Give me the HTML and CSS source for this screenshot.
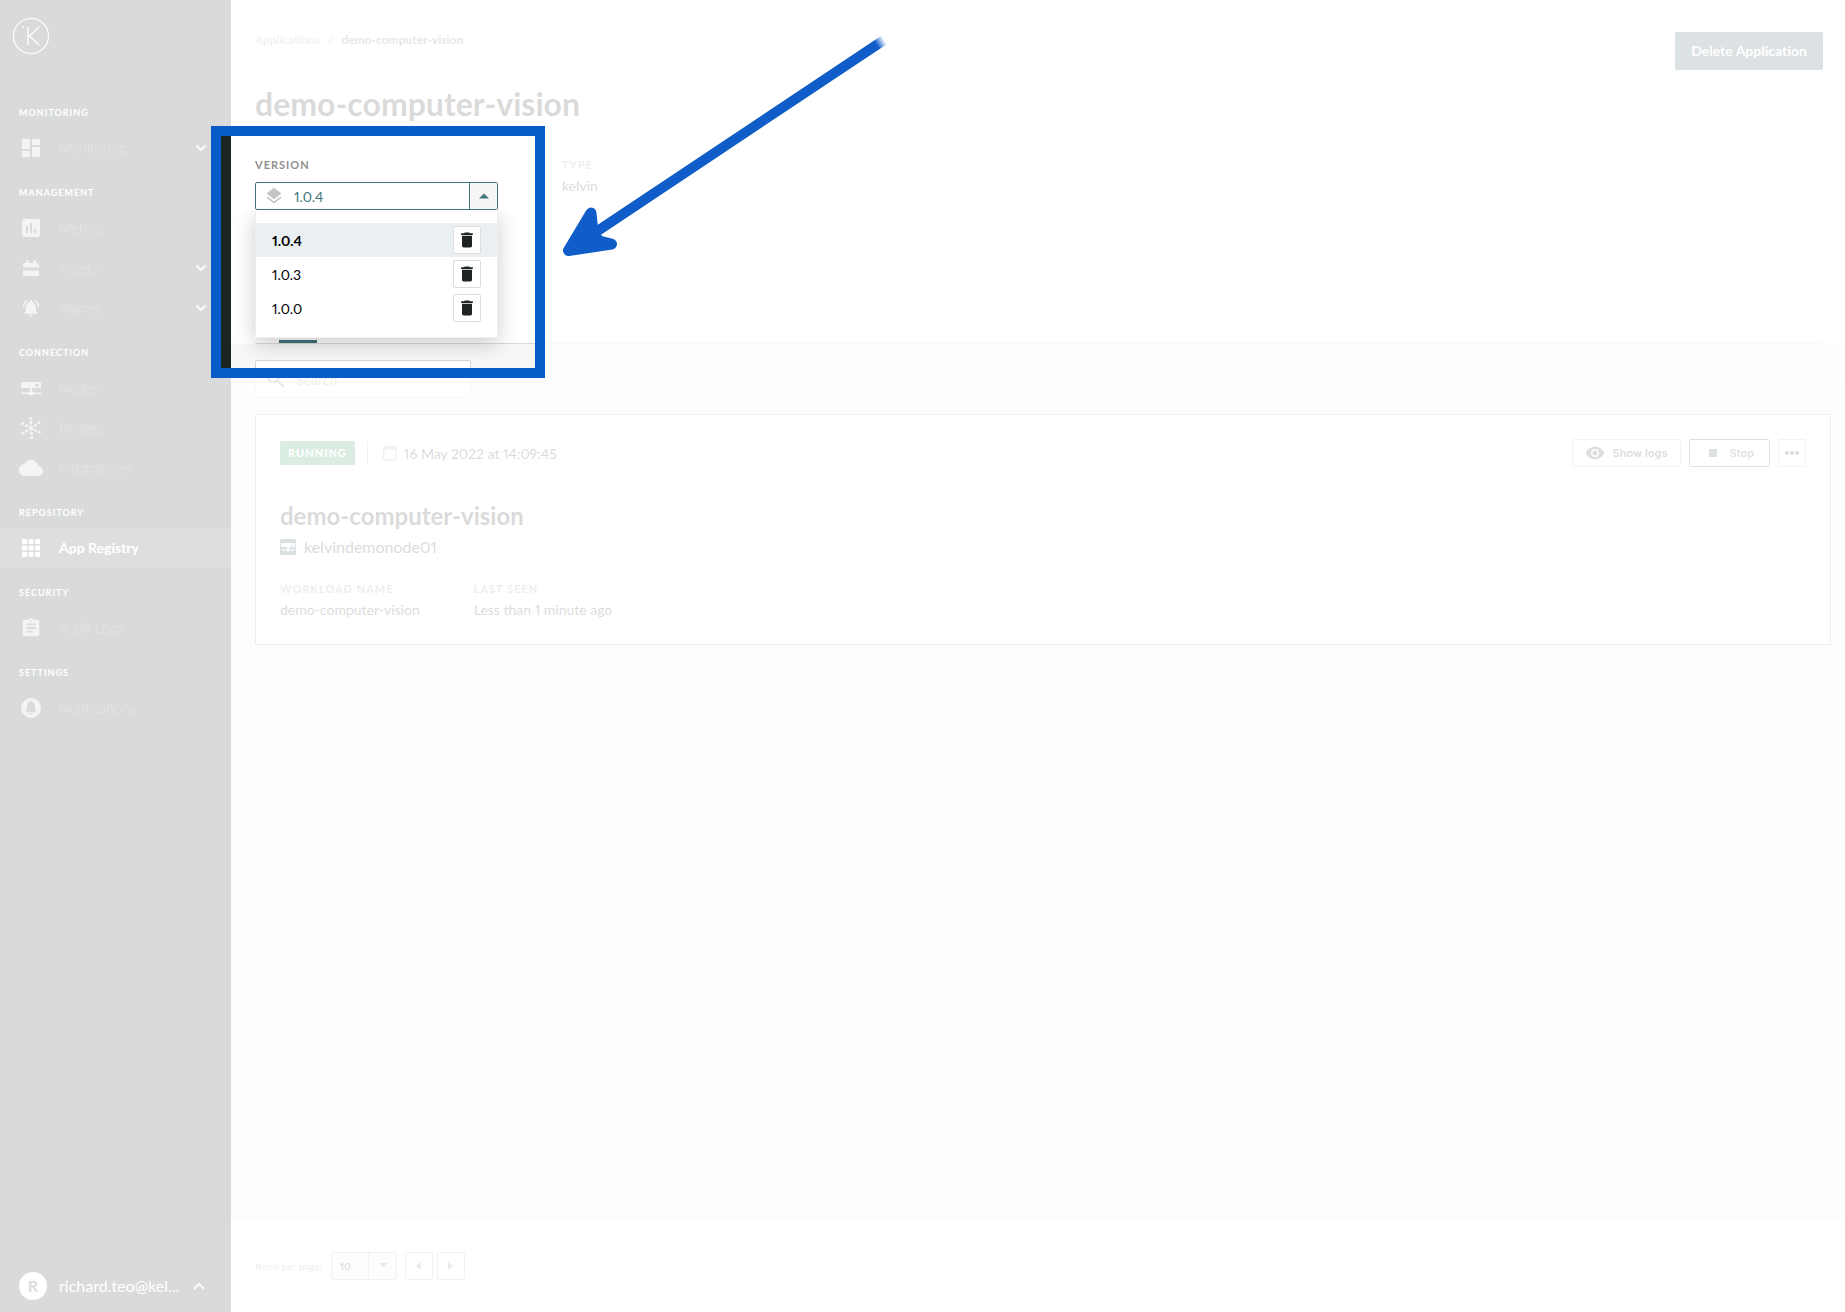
FILE: index.html
```html
<!DOCTYPE html>
<html lang="en">
<head>
  <meta charset="UTF-8" />
  <meta name="viewport" content="width=device-width, initial-scale=1.0"/>
  <title>demo-computer-vision - App Registry</title>
  <link rel="stylesheet" href="styles.css">
</head>
<body>
  <div class="app">
    <aside class="sidebar">
      <a class="logo" href="#" aria-label="Home">
        <svg width="38" height="38" viewBox="0 0 38 38" fill="none" stroke="#fff">
          <circle cx="19" cy="19" r="17.5" stroke-width="1.2"/>
          <path stroke-width="1.3" d="M16 10v18M27 10L17.500 19l9.500 9"/>
          <circle cx="11" cy="10" r="0.6"/>
        </svg>
      </a>

      <nav class="nav">
        <h4>Monitoring</h4>
        <a href="#">
          <svg class="icon" width="24" height="24" viewBox="0 0 24 24"><path d="M3 13h8V3H3v10zm0 8h8v-6H3v6zm10 0h8V11h-8v10zm0-18v6h8V3h-8z"/></svg>
          <span>Monitoring</span>
          <svg class="chevron" width="12" height="8" viewBox="0 0 12 8"><path d="M1.500 1.500L6 6l4.500-4.500"/></svg>
        </a>

        <h4>Management</h4>
        <a href="#">
          <svg class="icon" width="24" height="24" viewBox="0 0 24 24"><path d="M19 3H5c-1.100 0-2 .9-2 2v14c0 1.100.9 2 2 2h14c1.100 0 2-.9 2-2V5c0-1.100-.9-2-2-2zM9 17H7v-7h2v7zm4 0h-2V7h2v10zm4 0h-2v-4h2v4z"/></svg>
          <span>Metrics</span>
        </a>
        <a href="#">
          <svg class="icon" width="24" height="24" viewBox="0 0 24 24"><path d="M4 11.500V8q0-1 1-1h2V4.500h3V7h4V4.500h3V7h2q1 0 1 1v3.500zM4 14.500h16V19q0 1-1 1H5q-1 0-1-1z"/></svg>
          <span>Assets</span>
          <svg class="chevron" width="12" height="8" viewBox="0 0 12 8"><path d="M1.500 1.500L6 6l4.500-4.500"/></svg>
        </a>
        <a href="#">
          <svg class="icon" width="20" height="20" viewBox="0 0 24 24"><path d="M7.580 4.080L6.150 2.650C3.750 4.480 2.170 7.300 2.030 10.500h2c.15-2.650 1.510-4.970 3.550-6.420zm12.390 6.420h2c-.15-3.200-1.730-6.020-4.120-7.850l-1.420 1.430c2.020 1.450 3.390 3.770 3.540 6.420zM18 11c0-3.070-1.640-5.640-4.500-6.320V4c0-.83-.67-1.500-1.500-1.500s-1.500.67-1.500 1.500v.68C7.630 5.360 6 7.920 6 11v5l-2 2v1h16v-1l-2-2v-5zm-6 11c1.100 0 2-.9 2-2h-4c0 1.100.9 2 2 2z"/></svg>
          <span>Alarms</span>
          <svg class="chevron" width="12" height="8" viewBox="0 0 12 8"><path d="M1.500 1.500L6 6l4.500-4.500"/></svg>
        </a>

        <h4>Connection</h4>
        <a href="#">
          <svg class="icon" width="24" height="24" viewBox="0 0 24 24"><path fill-rule="evenodd" d="M3 6h18q1 0 1 1v5H13v3.500q1.300.3 2 1H22v1.500h-7q-.8 1.500-3 1.500t-3-1.500H2v-1.500h7q.7-.7 2-1V12H2V7q0-1 1-1zM16 8v2.500h4V8z"/></svg>
          <span>Nodes</span>
        </a>
        <a href="#">
          <svg class="icon" width="24" height="24" viewBox="0 0 24 24">
            <path stroke="#bcbcbc" d="M12 6v12.500M7 9.500l10 5.500M17 9L7.500 15"/>
            <circle cx="12" cy="12" r="2"/>
            <circle cx="11.500" cy="2.500" r="1.500"/><circle cx="12" cy="6.500" r="1.500"/>
            <circle cx="3.500" cy="7.500" r="1.500"/><circle cx="7.300" cy="9.500" r="1.500"/>
            <circle cx="20" cy="6.500" r="1.500"/><circle cx="16.500" cy="9" r="1.500"/>
            <circle cx="4" cy="17.300" r="1.500"/><circle cx="7.500" cy="15" r="1.500"/>
            <circle cx="20.500" cy="16" r="1.500"/><circle cx="16.500" cy="14.500" r="1.500"/>
            <circle cx="12.500" cy="17.500" r="1.500"/><circle cx="12.700" cy="21.500" r="1.500"/>
          </svg>
          <span>Bridges</span>
        </a>
        <a href="#">
          <svg class="icon" width="24" height="24" viewBox="0 0 24 24"><path d="M19.350 10.040C18.670 6.590 15.640 4 12 4 9.110 4 6.600 5.640 5.350 8.040 2.340 8.360 0 10.910 0 14c0 3.310 2.690 6 6 6h13c2.760 0 5-2.240 5-5 0-2.640-2.050-4.780-4.650-4.960z"/></svg>
          <span>Integrations</span>
        </a>

        <h4>Repository</h4>
        <a class="active" href="#">
          <svg class="icon" width="24" height="24" viewBox="0 0 24 24"><path d="M3 3h5v5H3zM9.500 3h5v5h-5zM16 3h5v5h-5zM3 9.500h5v5H3zM9.500 9.500h5v5h-5zM16 9.500h5v5h-5zM3 16h5v5H3zM9.500 16h5v5h-5zM16 16h5v5h-5z"/></svg>
          <span>App Registry</span>
        </a>

        <h4>Security</h4>
        <a href="#">
          <svg class="icon" width="22" height="22" viewBox="0 0 24 24"><path d="M19 3h-4.180C14.400 1.840 13.300 1 12 1c-1.300 0-2.400.84-2.820 2H5c-1.100 0-2 .9-2 2v14c0 1.100.9 2 2 2h14c1.100 0 2-.9 2-2V5c0-1.100-.9-2-2-2zm-7 0c.55 0 1 .45 1 1s-.45 1-1 1-1-.45-1-1 .45-1 1-1zm2 14H7v-2h7v2zm3-4H7v-2h10v2zm0-4H7V7h10v2z"/></svg>
          <span>Audit Logs</span>
        </a>

        <h4>Settings</h4>
        <a href="#">
          <svg class="icon" width="24" height="24" viewBox="0 0 24 24"><path fill-rule="evenodd" d="M12 2a10 10 0 100 20 10 10 0 000-20zM12 5q1 0 1 1 3 .8 3 4.500V14l1.500 1.500v.7h-11v-.7L8 14v-3.500Q8 6.800 11 6q0-1 1-1zM10.500 17.300h3q-.2 1.500-1.500 1.500t-1.500-1.500z"/></svg>
          <span>Notifications</span>
        </a>
      </nav>

      <button class="user" type="button">
        <span class="avatar">R</span>
        <span class="user-name">richard.teo@kel...</span>
        <svg class="chevron" width="12" height="8" viewBox="0 0 12 8"><path d="M1 7l5-5 5 5"/></svg>
      </button>
    </aside>

    <main class="main">
      <header class="header">
        <div class="header-row">
          <nav class="breadcrumb">
            <a href="#">Applications</a>
            <span>/</span>
            <strong>demo-computer-vision</strong>
          </nav>
          <button class="delete-btn" type="button">Delete Application</button>
        </div>
        <h1>demo-computer-vision</h1>

        <div class="details">
          <div class="version">
            <label class="label" for="version">Version</label>
            <div class="combo">
              <svg width="20" height="20" viewBox="0 0 24 24" fill="#c4c4c4"><path d="M11.990 18.540l-7.370-5.730L3 14.070l9 7 9-7-1.630-1.270-7.380 5.740zM12 16l7.360-5.730L21 9l-9-7-9 7 1.630 1.270L12 16z"/></svg>
              <input id="version" type="text" value="1.0.4" readonly>
              <button type="button" aria-label="Close versions">
                <svg width="10" height="6" viewBox="0 0 10 6"><path fill="#42767b" d="M0 5.500L5 .5l5 5z"/></svg>
              </button>
            </div>
            <ul class="menu">
              <li class="selected">
                <span>1.0.4</span>
                <button type="button" aria-label="Delete 1.0.4"><svg width="20" height="20" viewBox="0 0 24 24"><path d="M6 19c0 1.100.9 2 2 2h8c1.100 0 2-.9 2-2V7H6v12zM19 4h-3.500l-1-1h-5l-1 1H5v2h14V4z"/></svg></button>
              </li>
              <li>
                <span>1.0.3</span>
                <button type="button" aria-label="Delete 1.0.3"><svg width="20" height="20" viewBox="0 0 24 24"><path d="M6 19c0 1.100.9 2 2 2h8c1.100 0 2-.9 2-2V7H6v12zM19 4h-3.500l-1-1h-5l-1 1H5v2h14V4z"/></svg></button>
              </li>
              <li>
                <span>1.0.0</span>
                <button type="button" aria-label="Delete 1.0.0"><svg width="20" height="20" viewBox="0 0 24 24"><path d="M6 19c0 1.100.9 2 2 2h8c1.100 0 2-.9 2-2V7H6v12zM19 4h-3.500l-1-1h-5l-1 1H5v2h14V4z"/></svg></button>
              </li>
            </ul>
          </div>
          <div>
            <div class="label">Type</div>
            <div class="value">kelvin</div>
          </div>
        </div>

        <div class="tabs"><div class="tab-bar"></div></div>
      </header>

      <section class="content">
        <div class="search">
          <svg width="24" height="24" viewBox="0 0 24 24" fill="#777"><path d="M15.500 14h-.79l-.28-.27C15.410 12.590 16 11.110 16 9.500 16 5.910 13.090 3 9.500 3S3 5.910 3 9.500 5.910 16 9.500 16c1.610 0 3.090-.59 4.230-1.570l.27.28v.79l5 4.990L20.490 19l-4.990-5zm-6 0C7.010 14 5 11.990 5 9.500S7.010 5 9.500 5 14 7.010 14 9.500 11.990 14 9.500 14z"/></svg>
          <input type="text" placeholder="Search" aria-label="Search">
        </div>

        <article class="card">
          <div class="card-top">
            <span class="badge">Running</span>
            <span class="date">
              <svg width="14" height="16" viewBox="0 0 14 16" fill="none" stroke="#aaa"><rect x="0.700" y="2.200" width="12.600" height="12.600" rx="1" stroke-width="1.400"/><path stroke-width="2" d="M1 3.500h12M3.500.5v2M10.500.5v2"/></svg>
              16 May 2022 at 14:09:45
            </span>
            <div class="actions">
              <button class="logs-btn" type="button">
                <svg width="20" height="20" viewBox="0 0 24 24" fill="#333"><path d="M12 4.500C7 4.500 2.730 7.610 1 12c1.730 4.390 6 7.500 11 7.500s9.270-3.110 11-7.500c-1.730-4.390-6-7.500-11-7.500zM12 17c-2.760 0-5-2.240-5-5s2.240-5 5-5 5 2.240 5 5-2.240 5-5 5zm0-8c-1.660 0-3 1.340-3 3s1.340 3 3 3 3-1.340 3-3-1.340-3-3-3z"/></svg>
                Show logs
              </button>
              <button class="stop-btn" type="button">
                <svg width="8" height="8" viewBox="0 0 8 8"><rect width="8" height="8" fill="#2b4955"/></svg>
                Stop
              </button>
              <button class="more-btn" type="button" aria-label="More">
                <svg width="14" height="4" viewBox="0 0 14 4" fill="#333"><circle cx="2" cy="2" r="2"/><circle cx="7" cy="2" r="2"/><circle cx="12" cy="2" r="2"/></svg>
              </button>
            </div>
          </div>

          <h2>demo-computer-vision</h2>
          <div class="node">
            <svg width="16" height="16" viewBox="0 0 16 16"><rect width="16" height="16" rx="1" fill="#2b4955"/><path fill="#fff" fill-rule="evenodd" d="M1 4h14v4H9v2.500h5.500v1H9.500l-1.500 1-1.500-1h-5v-1H7V8H1zM10.500 6h3v1h-3z"/></svg>
            kelvindemonode01
          </div>

          <div class="facts">
            <div>
              <div class="label">Workload name</div>
              <div class="value">demo-computer-vision</div>
            </div>
            <div>
              <div class="label">Last seen</div>
              <div class="value">Less than 1 minute ago</div>
            </div>
          </div>
        </article>
      </section>

      <footer class="footer">
        <label for="perPage">Items per page:</label>
        <div class="per-page">
          <select id="perPage">
            <option>10</option>
            <option>25</option>
            <option>50</option>
          </select>
          <svg width="8" height="5" viewBox="0 0 8 5"><path fill="#777" d="M0 0h8L4 4.500z"/></svg>
        </div>
        <div class="pager">
          <button type="button" aria-label="Previous page"><svg width="5" height="8" viewBox="0 0 5 8"><path fill="#888" d="M5 0v8L0 4z"/></svg></button>
          <button type="button" aria-label="Next page"><svg width="5" height="8" viewBox="0 0 5 8"><path fill="#888" d="M0 0v8l5-4z"/></svg></button>
        </div>
      </footer>
    </main>

    <!-- guided tour: spotlight and pointer -->
    <div class="spotlight"></div>
    <svg class="pointer" width="330" height="230" viewBox="0 0 330 230">
      <defs>
        <linearGradient id="tail" gradientUnits="userSpaceOnUse" x1="316" y1="14" x2="324" y2="9">
          <stop offset="0" stop-color="#105cc9"/>
          <stop offset="1" stop-color="#105cc9" stop-opacity="0"/>
        </linearGradient>
      </defs>
      <path d="M30 206L324 10" stroke="url(#tail)" stroke-width="10" fill="none"/>
      <path d="M8.500 220.500L31 183l2 20 6 8 12.500 3z" fill="#105cc9" stroke="#105cc9" stroke-width="11" stroke-linejoin="round"/>
    </svg>
  </div>
</body>
</html>
```
FILE: styles.css
```css
* {
  box-sizing: border-box;
}

body {
  margin: 0;
  font-family: Lato, 'Open Sans', sans-serif;
  font-size: 14px;
  font-variant-numeric: proportional-nums;
  color: #1f1f1f;
  background: #fff;
}

button, input, select {
  font-family: inherit;
  font-variant-numeric: inherit;
  margin: 0;
}

button {
  cursor: pointer;
}

h1, h2, h4, ul {
  margin: 0;
  padding: 0;
}

.app {
  position: relative;
  display: flex;
  min-height: 100vh;
  overflow: hidden;
}

/* Sidebar */
.sidebar {
  display: flex;
  flex-direction: column;
  flex: none;
  width: 231px;
  background: #1c2522;
}

.logo {
  height: 88px;
  padding: 17px 12px;
}

.nav h4 {
  height: 40px;
  padding: 6px 19px 0;
  font-size: 9px;
  line-height: 38px;
  letter-spacing: 1px;
  text-transform: uppercase;
  color: #fff;
}

.nav a {
  display: flex;
  align-items: center;
  height: 40px;
  padding: 0 24px 0 19px;
  font-size: 14px;
  font-weight: 300;
  color: #6a6a6a;
  text-decoration: none;
}

.nav span {
  flex: 1;
  padding-bottom: 2px;
}

.icon {
  fill: #bcbcbc;
  width: 24px;
  margin-right: 16px;
}

.nav .active {
  background: #393636;
  font-weight: 700;
  color: #fff;
}

.active .icon {
  fill: #fff;
}

.chevron {
  flex: none;
  fill: none;
  stroke: #ddd;
  stroke-width: 2;
}

.user {
  display: flex;
  align-items: center;
  margin-top: auto;
  padding: 12px 26px 12px 19px;
  border: 0;
  background: none;
  color: #fff;
  font-size: 16px;
  text-align: left;
}

.avatar {
  width: 28px;
  height: 28px;
  margin-right: 12px;
  border-radius: 50%;
  background: #fff;
  color: #1f2422;
  font-weight: 700;
  line-height: 28px;
  text-align: center;
}

.user-name {
  flex: 1;
  padding-bottom: 2px;
  white-space: nowrap;
}

/* Page header */
.main {
  display: flex;
  flex-direction: column;
  flex: 1;
  min-width: 0;
}

.header {
  padding: 32px 22px 0 24px;
}

.header-row {
  display: flex;
  justify-content: space-between;
  height: 52px;
}

.breadcrumb {
  display: flex;
  gap: 8px;
  font-size: 12px;
  line-height: 16px;
  color: #999;
}

.breadcrumb a {
  color: #999;
  text-decoration: none;
}

.breadcrumb strong {
  color: #666;
}

.delete-btn {
  height: 38px;
  padding: 0 16px 2px;
  border: 0;
  border-radius: 2px;
  background: #2b4955;
  color: #fff;
  font-size: 14px;
  font-weight: 700;
}

h1 {
  font-size: 32px;
  line-height: 40px;
}

.details {
  display: flex;
  gap: 64px;
  height: 183px;
  padding-top: 33px;
}

.label {
  display: block;
  font-size: 11px;
  font-weight: 700;
  line-height: 16px;
  letter-spacing: 1px;
  text-transform: uppercase;
  color: #8f8f8f;
}

.value {
  padding-top: 3px;
  line-height: 20px;
}

.version {
  position: relative;
  width: 243px;
}

.combo {
  display: flex;
  align-items: center;
  height: 28px;
  margin-top: 9px;
  padding-left: 8px;
  border: 1px solid #42767b;
  border-radius: 2px;
  background: #fff;
}

.combo input {
  flex: 1;
  min-width: 0;
  padding: 0 10px;
  border: 0;
  background: none;
  color: #42767b;
  font-size: 14px;
  outline: none;
}

.combo button {
  display: flex;
  align-items: center;
  justify-content: center;
  align-self: stretch;
  width: 28px;
  border: 0;
  border-left: 1px solid #42767b;
  background: #f5f5f5;
}

.menu {
  position: absolute;
  top: 53px;
  left: 0;
  right: 0;
  padding: 13px 0 12px;
  border: 1px solid #f0f0f0;
  border-top: 0;
  background: #fff;
  box-shadow: 0 6px 20px rgba(0, 0, 0, 0.2);
  list-style: none;
  clip-path: inset(0 -30px -30px -30px);
}

.menu li {
  display: flex;
  align-items: center;
  justify-content: space-between;
  height: 34px;
  padding: 0 16px;
  color: #000;
}

.menu .selected {
  background: #eaeff1;
  font-weight: 700;
}

.menu svg {
  fill: #1f2322;
}

.menu button, .pager button {
  display: flex;
  align-items: center;
  justify-content: center;
  width: 28px;
  height: 28px;
  padding: 0;
  border: 1px solid #dcdcdc;
  border-radius: 2px;
  background: #fff;
}

.tabs {
  height: 37px;
  padding: 33px 24px 0;
  border-bottom: 1px solid #d9d9d9;
}

.tab-bar {
  width: 38px;
  height: 3px;
  background: #42737a;
}

/* Content */
.content {
  flex: 1;
  padding: 16px 14px 16px 24px;
  background: linear-gradient(#f6f7f9 34px, #e9f9f3 34px);
}

.search {
  display: flex;
  align-items: center;
  width: 216px;
  height: 38px;
  padding-left: 8px;
  border: 1px solid #d4d4d4;
  border-radius: 2px;
  background: #fff;
}

.search svg {
  flex: none;
}

.search input {
  flex: 1;
  min-width: 0;
  padding: 0 8px;
  border: 0;
  background: none;
  font-size: 14px;
}

.search input::placeholder {
  color: #999;
}

.card {
  margin-top: 16px;
  padding: 24px;
  border: 1px solid #929898;
  border-radius: 2px;
  background: #fff;
}

.card-top {
  display: flex;
  align-items: center;
  height: 28px;
}

.badge {
  height: 24px;
  padding: 0 8px;
  border-radius: 2px;
  background: #258c4f;
  color: #fff;
  font-size: 11px;
  font-weight: 700;
  line-height: 24px;
  letter-spacing: 1px;
  text-transform: uppercase;
}

.date {
  display: flex;
  align-items: center;
  gap: 7px;
  height: 24px;
  margin-left: 12px;
  padding-left: 15px;
  border-left: 1px solid #b0b0b0;
}

.actions {
  display: flex;
  gap: 8px;
  margin-left: auto;
}

.actions button {
  display: flex;
  align-items: center;
  justify-content: center;
  height: 28px;
  padding: 0 12px;
  border: 1px solid #b5b5b5;
  border-radius: 2px;
  background: #fff;
  color: #333;
  font-family: Inter, sans-serif;
  font-size: 11px;
  font-weight: 600;
}

.actions .logs-btn {
  gap: 8px;
}

.actions .stop-btn {
  gap: 13px;
  padding: 0 15px 0 19px;
  border-color: #2b4955;
  color: #2b4955;
}

.actions .more-btn {
  width: 28px;
  padding: 0;
}

h2 {
  margin-top: 33px;
  font-size: 24px;
  line-height: 32px;
}

.node {
  display: flex;
  align-items: center;
  gap: 8px;
  margin-top: 3px;
  font-size: 16px;
  line-height: 24px;
}

.facts {
  display: flex;
  gap: 54px;
  margin-top: 22px;
}

/* Pagination */
.footer {
  display: flex;
  align-items: center;
  height: 93px;
  padding-left: 24px;
  font-size: 10px;
}

.footer label {
  color: #8a8a8a;
}

.per-page {
  display: flex;
  align-items: center;
  position: relative;
  width: 66px;
  height: 28px;
  margin-left: 9px;
  border: 1px solid #b0b0b0;
  border-radius: 2px;
  background: #f0f0f0;
}

.per-page select {
  width: 100%;
  height: 100%;
  padding: 0 8px;
  border: 0;
  background: linear-gradient(#b0b0b0, #b0b0b0) 36px 0 / 1px 100% no-repeat;
  appearance: none;
  color: #333;
  font-size: 10px;
  font-weight: 700;
}

.per-page svg {
  position: absolute;
  right: 9px;
  pointer-events: none;
}

.pager {
  display: flex;
  gap: 4px;
  margin-left: 8px;
}

.pager button {
  border-color: #b0b0b0;
}

/* Tour overlay: everything outside the frame is washed out */
.spotlight {
  position: absolute;
  top: 126px;
  left: 211px;
  width: 334px;
  height: 252px;
  border: 10px solid #075cc7;
  box-shadow: 0 0 0 4000px rgba(255, 255, 255, 0.835);
  pointer-events: none;
}

.pointer {
  position: absolute;
  top: 30px;
  left: 560px;
  pointer-events: none;
}
```
